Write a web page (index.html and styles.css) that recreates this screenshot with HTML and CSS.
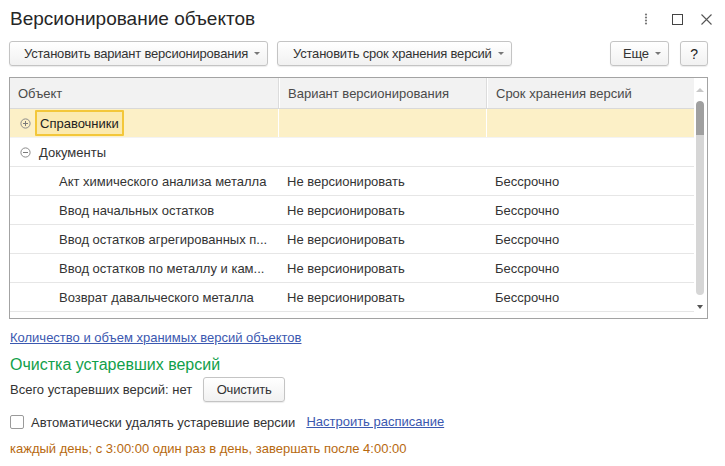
FILE: index.html
```html
<!DOCTYPE html>
<html lang="ru">
<head>
<meta charset="utf-8">
<title>Версионирование объектов</title>
<link rel="stylesheet" href="styles.css">
</head>
<body>
<div class="page">
  <header class="titlebar">
    <h1 class="title">Версионирование объектов</h1>
    <div class="win-icons">
      <svg class="ic-kebab" width="4" height="12" viewBox="0 0 4 12"><circle cx="2" cy="1.5" r="1.1" fill="#777"/><circle cx="2" cy="4.5" r="1.1" fill="#777"/><circle cx="2" cy="7.5" r="1.1" fill="#777"/><circle cx="2" cy="10.5" r="1.1" fill="#777"/></svg>
      <svg class="ic-max" width="11" height="11" viewBox="0 0 11 11"><rect x="0.5" y="0.5" width="10" height="10" fill="none" stroke="#444" stroke-width="1"/></svg>
      <svg class="ic-close" width="11" height="11" viewBox="0 0 11 11"><path d="M0.5 0.5 L10.5 10.5 M10.5 0.5 L0.5 10.5" stroke="#555" stroke-width="1.1" fill="none"/></svg>
    </div>
  </header>

  <div class="toolbar">
    <button class="btn btn-wide1">Установить вариант версионирования<span class="caret"></span></button>
    <button class="btn btn-wide2">Установить срок хранения версий<span class="caret"></span></button>
    <div class="spacer"></div>
    <button class="btn btn-more">Еще<span class="caret"></span></button>
    <button class="btn btn-help">?</button>
  </div>

  <div class="table">
    <div class="grid">
      <div class="row head">
        <div class="cell">Объект</div>
        <div class="cell">Вариант версионирования</div>
        <div class="cell">Срок хранения версий</div>
      </div>
      <div class="row selected">
        <div class="cell tree">
          <svg class="node" width="11" height="11" viewBox="0 0 11 11"><circle cx="5.5" cy="5.5" r="4.6" fill="none" stroke="#8a8a8a"/><path d="M3 5.5 H8 M5.5 3 V8" stroke="#7a7a7a"/></svg>
          <span class="focus">Справочники</span>
        </div>
        <div class="cell"></div>
        <div class="cell"></div>
      </div>
      <div class="row">
        <div class="cell tree">
          <svg class="node" width="11" height="11" viewBox="0 0 11 11"><circle cx="5.5" cy="5.5" r="4.6" fill="none" stroke="#8a8a8a"/><path d="M3 5.5 H8" stroke="#7a7a7a"/></svg>
          <span class="label">Документы</span>
        </div>
        <div class="cell"></div>
        <div class="cell"></div>
      </div>
      <div class="row">
        <div class="cell child">Акт химического анализа металла</div>
        <div class="cell">Не версионировать</div>
        <div class="cell">Бессрочно</div>
      </div>
      <div class="row">
        <div class="cell child">Ввод начальных остатков</div>
        <div class="cell">Не версионировать</div>
        <div class="cell">Бессрочно</div>
      </div>
      <div class="row">
        <div class="cell child">Ввод остатков агрегированных п...</div>
        <div class="cell">Не версионировать</div>
        <div class="cell">Бессрочно</div>
      </div>
      <div class="row">
        <div class="cell child">Ввод остатков по металлу и кам...</div>
        <div class="cell">Не версионировать</div>
        <div class="cell">Бессрочно</div>
      </div>
      <div class="row">
        <div class="cell child">Возврат давальческого металла</div>
        <div class="cell">Не версионировать</div>
        <div class="cell">Бессрочно</div>
      </div>
      <div class="row">
        <div class="cell child"></div>
        <div class="cell"></div>
        <div class="cell"></div>
      </div>
    </div>
    <div class="scrollbar">
      <span class="arrow-up"></span>
      <div class="track"><div class="thumb"></div></div>
      <span class="arrow-down"></span>
    </div>
  </div>

  <a class="link link-stats" href="#">Количество и объем хранимых версий объектов</a>
  <div class="group-title">Очистка устаревших версий</div>
  <div class="line total">
    <span>Всего устаревших версий: нет</span>
    <button class="btn btn-clear">Очистить</button>
  </div>
  <div class="line auto">
    <span class="checkbox"></span>
    <span class="auto-label">Автоматически удалять устаревшие версии</span>
    <a class="link" href="#">Настроить расписание</a>
  </div>
  <div class="schedule">каждый день; с 3:00:00 один раз в день, завершать после 4:00:00</div>
</div>
</body>
</html>
```

FILE: styles.css
```css
* { box-sizing: border-box; }

html, body {
  margin: 0;
  padding: 0;
  background: #fff;
}

body {
  font-family: "Liberation Sans", Arial, sans-serif;
  font-size: 13px;
  color: #333;
}

.page {
  width: 725px;
  height: 466px;
  padding: 0 17px 0 9px;
  display: flex;
  flex-direction: column;
  align-items: flex-start;
}

/* title bar */
.titlebar {
  width: 100%;
  height: 41px;
  display: flex;
  align-items: flex-start;
  justify-content: space-between;
}

.title {
  margin: 0 0 0 1px;
  padding-top: 7px;
  font-size: 19px;
  line-height: 24px;
  font-weight: normal;
  color: #262626;
}

.win-icons {
  display: flex;
  align-items: center;
  margin-top: 13px;
  margin-right: -4px;
}

.ic-kebab { margin-right: 24px; }
.ic-max { margin-right: 18px; }

/* toolbar */
.toolbar {
  width: 100%;
  display: flex;
  gap: 9px;
  height: 25px;
}

.spacer { flex: 1; }

.btn {
  font-family: inherit;
  font-size: 13px;
  color: #333;
  height: 25px;
  padding: 0 10px 0 14px;
  background: linear-gradient(#ffffff, #f1f1f1);
  border: 1px solid #c4c4c4;
  border-radius: 3px;
  box-shadow: 0 1px 1px rgba(0, 0, 0, 0.08);
  display: inline-flex;
  align-items: center;
  white-space: nowrap;
  letter-spacing: -0.2px;
}

.caret {
  display: inline-block;
  width: 0;
  height: 0;
  margin-left: 6px;
  border-left: 3px solid transparent;
  border-right: 3px solid transparent;
  border-top: 3px solid #777;
}

.btn-wide1 { width: 259px; }
.btn-wide2 { width: 235px; padding-left: 15px; }
.btn-more { width: 59px; padding-left: 12px; margin-right: 2px; }
.btn-help {
  width: 28px;
  padding: 0;
  justify-content: center;
  font-size: 14px;
  color: #222;
}

/* table */
.table {
  margin-top: 11px;
  width: 699px;
  height: 242px;
  border: 1px solid #a3a3a3;
  display: flex;
  overflow: hidden;
}

.grid {
  width: 684px;
  display: flex;
  flex-direction: column;
  overflow: hidden;
}

.row {
  display: grid;
  grid-template-columns: 268px 208px 208px;
  height: 29px;
  flex: none;
  border-bottom: 1px solid #e6e6e6;
}

.row .cell {
  display: flex;
  align-items: center;
  padding-left: 8px;
  white-space: nowrap;
  overflow: hidden;
}

.row .cell + .cell {
  border-left: 1px solid #fff;
}

.row.head {
  height: 31px;
  background: #f2f2f2;
  border-bottom: 1px solid #d9d9d9;
  color: #4a4a4a;
}

.row.head .cell + .cell {
  border-left: 1px solid #dcdcdc;
  box-shadow: inset 1px 0 0 #fff;
  padding-left: 9px;
}

.row.selected {
  background: #fcf0c7;
  border-bottom-color: #f3f3f3;
}

.row.selected .cell + .cell {
  border-left: 1px solid #fff;
}

.cell.tree {
  padding-left: 10px;
}

.node {
  flex: none;
  margin-right: 14px;
}

.cell.tree .focus {
  margin-left: -10px;
  padding: 0 3px;
  height: 26px;
  display: flex;
  align-items: center;
  background: #fbeab0;
  border: 2px solid #f3c73a;
  border-radius: 1px;
  color: #222;
}

.cell.tree .label {
  margin-left: -6px;
  color: #333;
}

.cell.child {
  padding-left: 49px;
}

.row .cell:nth-child(2) { padding-left: 8px; }
.row .cell:nth-child(3) { padding-left: 8px; }

/* scrollbar */
.scrollbar {
  width: 13px;
  display: flex;
  flex-direction: column;
  align-items: center;
  padding-top: 10px;
}

.arrow-up {
  width: 0;
  height: 0;
  border-left: 4px solid transparent;
  border-right: 4px solid transparent;
  border-bottom: 4px solid #c8c8c8;
  margin-left: -1px;
}

.track {
  margin-top: 9px;
  width: 8px;
  height: 194px;
  background: #d6d6d6;
  border-radius: 4px;
  margin-left: -1px;
  overflow: hidden;
}

.thumb {
  height: 34px;
  background: #a0a0a0;
  border-radius: 4px 4px 0 0;
}

.arrow-down {
  margin-top: 10px;
  width: 0;
  height: 0;
  border-left: 3px solid transparent;
  border-right: 3px solid transparent;
  border-top: 4px solid #555;
  margin-left: -1px;
}

/* bottom */
.link {
  color: #3b58b0;
  text-decoration: underline;
  line-height: 16px;
}

.link-stats {
  margin: 11px 0 0 1px;
}

.group-title {
  margin: 9px 0 0 1px;
  font-size: 16px;
  line-height: 20px;
  color: #11a04a;
}

.line {
  display: flex;
  align-items: center;
  margin-left: 1px;
}

.total {
  margin-top: 2px;
  height: 25px;
}

.btn-clear {
  margin-left: 11px;
  width: 82px;
  padding: 0;
  justify-content: center;
}

.auto {
  margin-top: 10px;
  height: 20px;
}

.checkbox {
  width: 14px;
  height: 14px;
  border: 1px solid #9a9a9a;
  border-radius: 2px;
  background: #fff;
  margin-right: 7px;
}

.auto-label {
  margin-right: 11px;
}

.schedule {
  margin: 9px 0 0 1px;
  line-height: 16px;
  color: #b7690f;
}
```
